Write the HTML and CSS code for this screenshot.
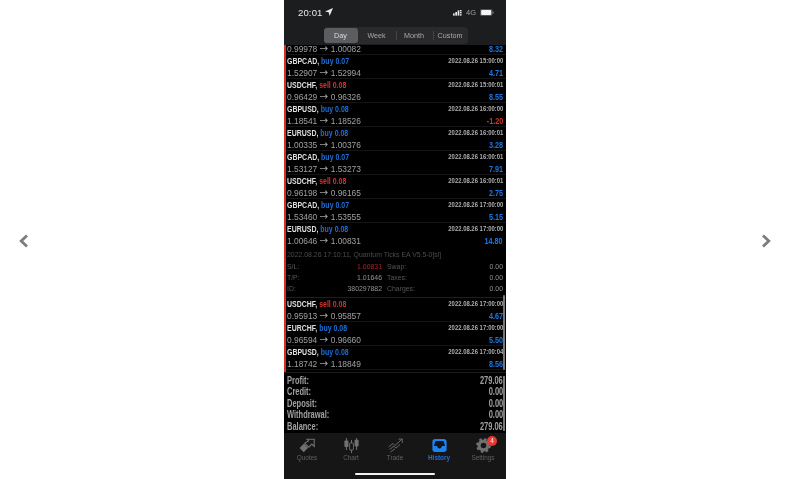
FILE: index.html
```html
<!DOCTYPE html>
<html lang="en">
<head>
<meta charset="utf-8">
<title>History</title>
<link rel="stylesheet" href="styles.css">
</head>
<body>
<div class="stage">
  <button class="nav" aria-label="Previous"><svg width="12" height="16" viewBox="0 0 12 16"><path d="M9 2.5 L3.2 8 L9 13.5" fill="none" stroke="#7c7c7c" stroke-width="2.8"/></svg></button>
  <main class="phone">
    <header class="top">
      <div class="status">
        <div class="clock">20:01
          <svg width="8" height="8" viewBox="0 0 7 7"><path d="M7 0 L0 3 L3.2 3.8 L4 7 Z" fill="#e8e8e8"/></svg>
        </div>
        <div class="sys">
          <svg width="9" height="7" viewBox="0 0 9 7"><g fill="#e8e8e8"><rect x="0" y="4.4" width="1.7" height="2.2"/><rect x="2.3" y="3" width="1.7" height="3.6"/><rect x="4.6" y="1.4" width="1.7" height="5.2"/><rect x="6.9" y="1" width="1.7" height="1.4"/><rect x="6.9" y="3" width="1.7" height="1.4"/><rect x="6.9" y="5.2" width="1.7" height="1.4"/></g></svg>
          <span class="net">4G</span>
          <svg width="14" height="7" viewBox="0 0 14 7"><rect x=".3" y=".3" width="11.8" height="6.4" rx="1.8" fill="none" stroke="#8a8a8a" stroke-width=".6"/><rect x="1.1" y="1.1" width="10.2" height="4.8" rx="1" fill="#f4f4f4"/><rect x="12.6" y="2.4" width="1" height="2.2" rx=".5" fill="#8a8a8a"/></svg>
        </div>
      </div>
      <div class="tabs-wrap">
        <div class="segments">
          <span class="seg active">Day</span>
          <span class="seg">Week</span>
          <span class="seg divided">Month</span>
          <span class="seg divided">Custom</span>
        </div>
      </div>
    </header>

    <section class="list">
      <div class="row first"><div class="line"><span class="sym">&nbsp;</span></div><div class="line"><span class="price">0.99978 <span class="arr">→</span> 1.00082</span><span class="pl">8.32</span></div></div>
      <div class="row"><div class="line"><span class="sym">GBPCAD, <b class="buy">buy 0.07</b></span><span class="date">2022.08.26 15:00:00</span></div><div class="line"><span class="price">1.52907 <span class="arr">→</span> 1.52994</span><span class="pl">4.71</span></div></div>
      <div class="row"><div class="line"><span class="sym">USDCHF, <b class="sell">sell 0.08</b></span><span class="date">2022.08.26 15:00:01</span></div><div class="line"><span class="price">0.96429 <span class="arr">→</span> 0.96326</span><span class="pl">8.55</span></div></div>
      <div class="row"><div class="line"><span class="sym">GBPUSD, <b class="buy">buy 0.08</b></span><span class="date">2022.08.26 16:00:00</span></div><div class="line"><span class="price">1.18541 <span class="arr">→</span> 1.18526</span><span class="pl neg">-1.20</span></div></div>
      <div class="row"><div class="line"><span class="sym">EURUSD, <b class="buy">buy 0.08</b></span><span class="date">2022.08.26 16:00:01</span></div><div class="line"><span class="price">1.00335 <span class="arr">→</span> 1.00376</span><span class="pl">3.28</span></div></div>
      <div class="row"><div class="line"><span class="sym">GBPCAD, <b class="buy">buy 0.07</b></span><span class="date">2022.08.26 16:00:01</span></div><div class="line"><span class="price">1.53127 <span class="arr">→</span> 1.53273</span><span class="pl">7.91</span></div></div>
      <div class="row"><div class="line"><span class="sym">USDCHF, <b class="sell">sell 0.08</b></span><span class="date">2022.08.26 16:00:01</span></div><div class="line"><span class="price">0.96198 <span class="arr">→</span> 0.96165</span><span class="pl">2.75</span></div></div>
      <div class="row"><div class="line"><span class="sym">GBPCAD, <b class="buy">buy 0.07</b></span><span class="date">2022.08.26 17:00:00</span></div><div class="line"><span class="price">1.53460 <span class="arr">→</span> 1.53555</span><span class="pl">5.15</span></div></div>
      <div class="row open"><div class="line"><span class="sym">EURUSD, <b class="buy">buy 0.08</b></span><span class="date">2022.08.26 17:00:00</span></div><div class="line"><span class="price">1.00646 <span class="arr">→</span> 1.00831</span><span class="pl">14.80</span></div></div>
      <div class="details">
        <div class="comment">2022.08.26 17:10:11, Quantum Ticks EA V5.5-0[sl]</div>
        <div class="grid">
          <span>S/L:</span><span class="val red">1.00831</span><span class="k2">Swap:</span><span class="val">0.00</span>
          <span>T/P:</span><span class="val">1.01646</span><span class="k2">Taxes:</span><span class="val">0.00</span>
          <span>ID:</span><span class="val">380297882</span><span class="k2">Charges:</span><span class="val">0.00</span>
        </div>
      </div>
      <div class="row"><div class="line"><span class="sym">USDCHF, <b class="sell">sell 0.08</b></span><span class="date">2022.08.26 17:00:00</span></div><div class="line"><span class="price">0.95913 <span class="arr">→</span> 0.95857</span><span class="pl">4.67</span></div></div>
      <div class="row"><div class="line"><span class="sym">EURCHF, <b class="buy">buy 0.08</b></span><span class="date">2022.08.26 17:00:00</span></div><div class="line"><span class="price">0.96594 <span class="arr">→</span> 0.96660</span><span class="pl">5.50</span></div></div>
      <div class="row"><div class="line"><span class="sym">GBPUSD, <b class="buy">buy 0.08</b></span><span class="date">2022.08.26 17:00:04</span></div><div class="line"><span class="price">1.18742 <span class="arr">→</span> 1.18849</span><span class="pl">8.56</span></div></div>
      <i class="bar"></i>
    </section>

    <section class="summary">
      <div class="sum"><span class="k">Profit:</span><span class="v">279.06</span></div>
      <div class="sum"><span class="k">Credit:</span><span class="v">0.00</span></div>
      <div class="sum"><span class="k">Deposit:</span><span class="v">0.00</span></div>
      <div class="sum"><span class="k">Withdrawal:</span><span class="v">0.00</span></div>
      <div class="sum"><span class="k">Balance:</span><span class="v">279.06</span></div>
      <i class="bar2"></i>
    </section>

    <nav class="tabbar">
      <div class="tab"><svg width="16" height="14" viewBox="0 0 16 14"><path d="M0.5 9.5 L5 5 L9.2 9.2 L4.7 13.7 Z" fill="#707070"/><path d="M8 .8 H15.2 V8 L12.8 5.6 L9.8 8.6 L5.8 4.6 L9.6 2.4 Z" fill="none" stroke="#707070" stroke-width="1.1"/></svg><span>Quotes</span></div>
      <div class="tab"><svg width="15" height="15" viewBox="0 0 15 15" fill="#707070"><rect x="1.9" y="0" width="1" height="12"/><rect x="0.4" y="2.4" width="4" height="6.6" rx=".8"/><rect x="7" y="2" width="1" height="13"/><rect x="5.6" y="5" width="3.8" height="7" rx=".5" fill="#161616" stroke="#707070" stroke-width=".9"/><rect x="12.1" y="0" width="1" height="12"/><rect x="10.6" y="1.8" width="4" height="6.8" rx=".8"/></svg><span>Chart</span></div>
      <div class="tab"><svg width="15" height="14" viewBox="0 0 15 14" fill="none" stroke="#707070" stroke-width=".9"><path d="M0.5 8.5 L5 5 L7 7 L13.8 .8"/><path d="M10.5 .6 H14.3 V4.4"/><path d="M1.5 11 L6 7.6 L8 9.6 L12 6"/><path d="M2.5 13.6 L7 10.2"/></svg><span>Trade</span></div>
      <div class="tab on"><svg width="15" height="13" viewBox="0 0 15 13"><path fill-rule="evenodd" d="M3 0 H12 C13.4 0 14.6 1.1 14.6 2.5 V10.5 C14.6 11.9 13.4 13 12 13 H3 C1.6 13 .4 11.9 .4 10.5 V2.5 C.4 1.1 1.6 0 3 0 Z M3.4 2 L2 7 H5 C5.4 8.6 6.2 9.4 7.5 9.4 C8.8 9.4 9.6 8.6 10 7 H13 L11.6 2 Z" fill="#1b84f0"/></svg><span>History</span></div>
      <div class="tab"><svg width="15" height="15" viewBox="0 0 15 15"><circle cx="7.5" cy="7.5" r="4.4" fill="none" stroke="#707070" stroke-width="3.2"/><circle cx="7.5" cy="7.5" r="6.4" fill="none" stroke="#707070" stroke-width="2" stroke-dasharray="2.6 2.4"/></svg><span>Settings</span><b class="badge">4</b></div>
      <i class="home"></i>
    </nav>
  </main>
  <button class="nav" aria-label="Next"><svg width="12" height="16" viewBox="0 0 12 16"><path d="M3 2.5 L8.8 8 L3 13.5" fill="none" stroke="#7c7c7c" stroke-width="2.8"/></svg></button>
</div>
</body>
</html>
```

FILE: styles.css
```css
* { box-sizing: border-box; }
html, body { margin: 0; height: 100%; background: #fff; overflow: hidden; }
body { font-family: "Liberation Sans", Arial, sans-serif; }

.stage {
  width: 790px;
  height: 479px;
  display: flex;
  justify-content: center;
  align-items: center;
  position: relative;
}
.nav {
  position: absolute;
  top: 233px;
  left: 18px;
  width: 12px;
  height: 16px;
  padding: 0;
  border: 0;
  background: none;
  display: flex;
}
.nav:last-child { left: 760px; }

.phone {
  width: 222px;
  height: 479px;
  background: #000;
  display: flex;
  flex-direction: column;
  filter: blur(0.4px);
  overflow: hidden;
  position: relative;
}

.top { height: 45px; background: #1c1d1f; flex: none; position: relative; z-index: 2; }
.status {
  height: 24px;
  padding: 0 12px 0 14px;
  display: flex;
  justify-content: space-between;
  align-items: center;
  color: #e8e8e8;
}
.clock { font-size: 9.6px; display: flex; align-items: center; gap: 2px; letter-spacing: .1px; }
.sys { display: flex; align-items: center; gap: 4px; }
.net { font-size: 7.5px; color: #a0a0a0; }
.tabs-wrap { display: flex; justify-content: center; padding-top: 3px; padding-left: 1px; }
.segments {
  width: 144px;
  height: 17px;
  background: #2a2a2c;
  border-radius: 4px;
  display: grid;
  grid-template-columns: 34px 38px 37px 35px;
  align-items: center;
}
.seg { font-size: 7.2px; color: #a8a8aa; text-align: center; line-height: 15px; position: relative; }
.seg.active { background: #5c5d61; color: #dcdcdc; border-radius: 3px; }
.seg.divided::before {
  content: "";
  position: absolute;
  left: 0;
  top: 3px;
  height: 9px;
  width: 1px;
  background: #444446;
}

.list {
  height: 327px;
  flex: none;
  border-left: 2px solid #d5301f;
  overflow: hidden;
  position: relative;
  color: #fff;
}
.row { height: 24px; padding: 0 3px 0 1px; border-bottom: 1px solid #141416; }
.row.first { margin-top: -14px; }
.row.open { border-bottom: 0; }
.line { height: 12px; line-height: 12px; display: flex; justify-content: space-between; align-items: center; }
.sym, .date, .pl, .sum { font-weight: 700; }
.sym, .k { transform: scaleX(.72); transform-origin: left center; }
.date, .pl, .v { transform: scaleX(.74); transform-origin: right center; }
.sym { font-size: 9.7px; color: #dedede; white-space: pre; }
.sym b { font-weight: 700; }
.buy { color: #1b6fd8; }
.sell { color: #d2322d; }
.date { font-size: 8px; color: #b0b0b0; }
.price { font-size: 8.4px; color: #a0a0a0; white-space: pre; }
.arr { font-family: "DejaVu Sans", sans-serif; font-size: 10.4px; line-height: 1; }
.pl { font-size: 9.8px; color: #1d76e0; }
.pl.neg { color: #d2322d; }

.details { height: 51px; padding: 1px 3px 0 1px; color: #565656; font-size: 6.9px; border-bottom: 1px solid #1e1e1e; }
.comment { height: 13px; line-height: 14px; color: #4c4c4c; }
.grid {
  display: grid;
  grid-template-columns: 24px 71px 1fr auto;
  grid-auto-rows: 11px;
  line-height: 11px;
}
.grid .val { text-align: right; color: #939393; }
.grid .val.red { color: #a6262a; }
.grid .k2 { padding-left: 5px; }

.bar { position: absolute; left: 217px; top: 250px; width: 1.5px; height: 75px; background: #777; border-radius: 1px; }

.summary {
  height: 61px;
  flex: none;
  padding: 1.5px 3px 0 3px;
  background: #000;
  position: relative;
  border-top: 1px solid #1a1a1a;
}
.sum { height: 11.6px; line-height: 11.6px; display: flex; justify-content: space-between; font-size: 10.4px; color: #a0a0a0; }
.sum .v { transform: scaleX(.72); }
.bar2 { position: absolute; left: 219px; top: 3px; width: 1.5px; height: 55px; background: #777; }

.tabbar {
  height: 46px;
  flex: none;
  background: #161616;
  display: grid;
  grid-template-columns: repeat(5, 44px);
  padding: 5px 0 0 0;
  justify-content: center;
  position: relative;
}
.tab { display: flex; flex-direction: column; align-items: center; height: 24px; justify-content: flex-start; gap: 1px; position: relative; }
.tab svg { height: 15px; flex: none; }
.tab span { font-size: 6.4px; color: #606060; line-height: 8px; }
.tab.on span { color: #1b6fd8; font-weight: 700; }
.badge {
  position: absolute;
  left: 26px;
  top: -2px;
  width: 10px;
  height: 10px;
  border-radius: 50%;
  background: #e8382f;
  color: #f4f4f4;
  font-size: 6.5px;
  font-weight: 400;
  line-height: 10px;
  text-align: center;
}
.home {
  position: absolute;
  left: 71px;
  bottom: 4px;
  width: 80px;
  height: 2.5px;
  background: #f2f2f2;
  border-radius: 2px;
}
```
